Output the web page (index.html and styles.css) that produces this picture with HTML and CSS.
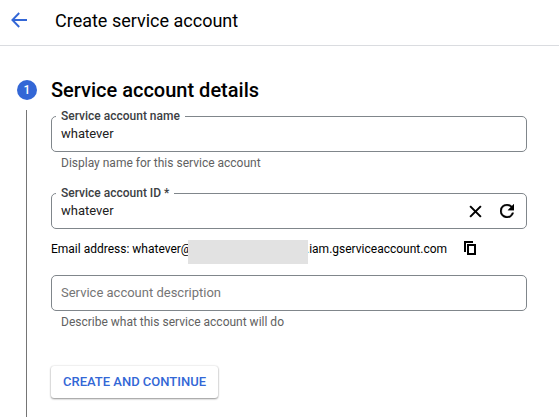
FILE: index.html
```html
<!DOCTYPE html>
<html lang="en">
<head>
<meta charset="utf-8">
<title>Create service account</title>
<link rel="stylesheet" href="styles.css">
</head>
<body>
<header class="topbar">
  <svg class="back" viewBox="0 0 16 16"><path d="M16 8H1.5M8.2 1L1.4 8l6.8 7" fill="none" stroke="currentColor" stroke-width="1.9"/></svg>
  <h1 class="title">Create service account</h1>
</header>
<main class="step">
  <div class="rail">
    <span class="badge">1</span>
    <span class="line"></span>
  </div>
  <form class="form">
    <h2 class="heading">Service account details</h2>
    <div class="field">
      <label class="label">Service account name</label>
      <span class="value">whatever</span>
    </div>
    <p class="hint">Display name for this service account</p>
    <div class="field">
      <label class="label">Service account ID *</label>
      <span class="value">whatever</span>
      <svg class="icon clear" viewBox="0 0 14 14"><path d="M1.2 1.2l11.6 11.6M12.8 1.2L1.2 12.8" fill="none" stroke="currentColor" stroke-width="2.2"/></svg>
      <svg class="icon" viewBox="4 4 16 16"><path d="M17.65 6.35A7.96 7.96 0 0 0 12 4a8 8 0 1 0 7.73 10h-2.08A6 6 0 1 1 12 6c1.66 0 3.14.69 4.22 1.78L13 11h7V4z" fill="currentColor" stroke="currentColor" stroke-width=".4"/></svg>
    </div>
    <div class="email">
      <span class="address">Email address: whatever@</span>
      <span class="redacted"></span>
      <span class="domain">.iam.gserviceaccount.com</span>
      <svg class="copy" viewBox="0 0 13 14"><path d="M1 11V1h8M4 4h7v9H4z" fill="none" stroke="currentColor" stroke-width="2"/></svg>
    </div>
    <div class="field">
      <span class="placeholder">Service account description</span>
    </div>
    <p class="hint">Describe what this service account will do</p>
    <button class="submit" type="button">CREATE AND CONTINUE</button>
  </form>
</main>
</body>
</html>
```
FILE: styles.css
```css
* { box-sizing: border-box; }

body {
  margin: 0;
  height: 417px;
  overflow: hidden;
  display: flex;
  flex-direction: column;
  background: #fff;
  color: #000;
  font: 12px/16px Roboto, "Liberation Sans", sans-serif;
}

.topbar {
  height: 46px;
  flex: none;
  display: flex;
  align-items: center;
  padding: 0 0 5px 11px;
  border-bottom: 1px solid #dadce0;
}

.back { width: 16px; height: 16px; color: #3367d6; }

.title { margin: 2px 0 0 28px; font-size: 18px; line-height: 24px; font-weight: 400; }

.step { flex: 1; display: flex; padding-left: 17px; }

.rail {
  width: 34px;
  padding-top: 34px;
  display: flex;
  flex-direction: column;
  gap: 10px;
}

.badge {
  width: 20px;
  height: 20px;
  border-radius: 50%;
  background: #3367d6;
  color: #fff;
  text-align: center;
  font-weight: 500;
  line-height: 20px;
}

.line { flex: 1; width: 1px; margin-left: 9px; background: #757575; }

.form { width: 476px; padding-top: 32px; }

.heading { margin: 0 0 14px; font-size: 20px; line-height: 24px; font-weight: 500; }

.field {
  position: relative;
  height: 36px;
  display: flex;
  align-items: center;
  padding: 0 12px 0 9px;
  border: 1px solid #80868b;
  border-radius: 5px;
}

.label {
  position: absolute;
  left: 4px;
  top: -9px;
  padding: 0 5px;
  background: #fff;
  color: #3c4043;
  font-weight: 500;
}

.value { flex: 1; font-size: 13px; color: #212121; }

.placeholder { font-size: 13px; color: #757575; }

.icon { width: 14px; height: 14px; }

.clear { width: 13px; height: 13px; margin-right: 18px; }

.hint { margin: 3px 0 22px 10px; color: #616161; }

.email { height: 24px; margin: 11px 0; display: flex; align-items: center; }

.address { width: 137px; white-space: nowrap; padding-bottom: 6px; }

.redacted { z-index: 1; width: 120px; height: 24px; background: #e2e2e2; }

.domain { width: 141px; margin-left: -2px; white-space: nowrap; padding-bottom: 6px; }

.copy { width: 13px; height: 14px; margin: 0 0 8px 17px; }

.submit {
  display: block;
  width: 167px;
  height: 32px;
  margin-top: 36px;
  padding: 0;
  border: 0;
  border-radius: 3px;
  background: #fff;
  color: #3367d6;
  font: 500 13px/32px Roboto, "Liberation Sans", sans-serif;
  box-shadow: 0 1px 2px rgba(0, 0, 0, .4), 0 0 2px rgba(0, 0, 0, .15);
}
```
